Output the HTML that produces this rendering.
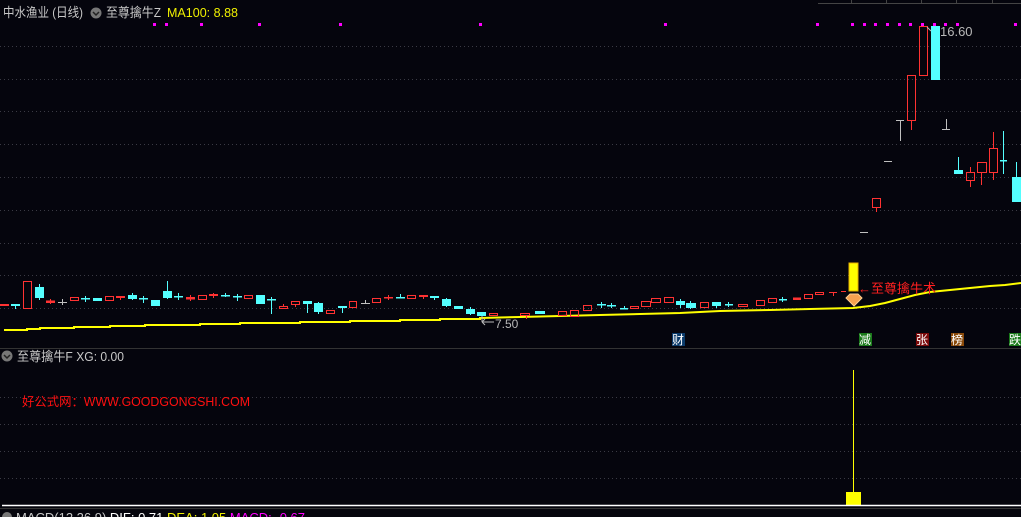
<!DOCTYPE html>
<html><head><meta charset="utf-8"><style>
html,body{margin:0;padding:0;background:#05050d;width:1021px;height:517px;overflow:hidden}
svg{display:block}
text{font-family:"Liberation Sans","Noto Sans CJK SC",sans-serif}
</style></head><body>
<svg width="1021" height="517" viewBox="0 0 1021 517" xmlns="http://www.w3.org/2000/svg">
<rect width="1021" height="517" fill="#05050d"/>
<g stroke="#3a3a44" stroke-dasharray="1,3" stroke-width="1">
<line x1="0" y1="46.5" x2="1021" y2="46.5"/><line x1="0" y1="79.5" x2="1021" y2="79.5"/>
<line x1="0" y1="111.5" x2="1021" y2="111.5"/><line x1="0" y1="144.5" x2="1021" y2="144.5"/>
<line x1="0" y1="177.5" x2="1021" y2="177.5"/><line x1="0" y1="210.5" x2="1021" y2="210.5"/>
<line x1="0" y1="243.5" x2="1021" y2="243.5"/><line x1="0" y1="275.5" x2="1021" y2="275.5"/>
<line x1="0" y1="308.5" x2="1021" y2="308.5"/>
<line x1="0" y1="397.5" x2="1021" y2="397.5"/><line x1="0" y1="424.5" x2="1021" y2="424.5"/>
<line x1="0" y1="451.5" x2="1021" y2="451.5"/><line x1="0" y1="478.5" x2="1021" y2="478.5"/>
</g>
<line x1="0" y1="348.5" x2="1021" y2="348.5" stroke="#333"/>
<line x1="818" y1="3.5" x2="1021" y2="3.5" stroke="#444"/>
<g stroke="#444"><line x1="851.5" y1="0" x2="851.5" y2="3"/><line x1="886.5" y1="0" x2="886.5" y2="3"/><line x1="921.5" y1="0" x2="921.5" y2="3"/><line x1="956.5" y1="0" x2="956.5" y2="3"/><line x1="992.5" y1="0" x2="992.5" y2="3"/></g>
<!-- header -->
<text x="3" y="17" fill="#c8c8c8" font-size="13" textLength="80" lengthAdjust="spacingAndGlyphs">中水渔业 (日线)</text>
<circle cx="96" cy="13" r="5.5" fill="#777"/><path d="M93 12 L96 15 L99 12" stroke="#222" fill="none" stroke-width="1.5"/>
<text x="106" y="17" fill="#c8c8c8" font-size="13" textLength="55" lengthAdjust="spacingAndGlyphs">至尊擒牛Z</text>
<text x="167" y="17" fill="#f0f000" font-size="13" textLength="71" lengthAdjust="spacingAndGlyphs">MA100: 8.88</text>
<!-- magenta dots -->
<g fill="#ff00ff">
<rect x="153" y="23" width="3" height="3"/><rect x="165" y="23" width="3" height="3"/><rect x="200" y="23" width="3" height="3"/><rect x="258" y="23" width="3" height="3"/><rect x="339" y="23" width="3" height="3"/><rect x="479" y="23" width="3" height="3"/><rect x="664" y="23" width="3" height="3"/><rect x="816" y="23" width="3" height="3"/>
<rect x="851" y="23" width="3" height="3"/><rect x="863" y="23" width="3" height="3"/><rect x="874" y="23" width="3" height="3"/><rect x="886" y="23" width="3" height="3"/><rect x="898" y="23" width="3" height="3"/><rect x="909" y="23" width="3" height="3"/><rect x="921" y="23" width="3" height="3"/><rect x="933" y="23" width="3" height="3"/><rect x="944" y="23" width="3" height="3"/><rect x="956" y="23" width="3" height="3"/><rect x="1014" y="23" width="3" height="3"/>
</g>
<!-- MA line -->
<polyline fill="none" stroke="#ffff00" stroke-width="2" points="4,330 27,330 27,329 40,329 40,328 74,328 74,327 110,327 110,326 145,326 145,325 200,325 200,324 240,324 240,323 300,323 300,322 350,322 350,321 400,321 400,320 440,320 440,319 480,319 480,318 520,317 560,316 600,315 640,314 680,313 720,311 770,310 810,309 853,308 870,306 885,303 900,299 915,295 930,292 950,290 970,288 990,286 1005,285 1021,283"/>
<!-- cyan candles -->
<g fill="#54ffff" stroke="#54ffff">
<rect x="11.5" y="304.5" width="8" height="1"/><line x1="15.5" y1="305" x2="15.5" y2="309"/>
<rect x="35.5" y="287.5" width="8" height="10"/><line x1="39.5" y1="284" x2="39.5" y2="300"/>
<rect x="81.5" y="298.5" width="8" height="0.5"/><line x1="85.5" y1="296" x2="85.5" y2="302"/>
<rect x="93.5" y="298.5" width="8" height="2"/>
<rect x="128.5" y="295.5" width="8" height="3"/><line x1="132.5" y1="293" x2="132.5" y2="300"/>
<rect x="139.5" y="298.5" width="8" height="0.5"/><line x1="143.5" y1="296" x2="143.5" y2="303"/>
<rect x="151.5" y="300.5" width="8" height="5"/>
<rect x="163.5" y="291.5" width="8" height="6"/><line x1="167.5" y1="281" x2="167.5" y2="299"/>
<rect x="174.5" y="296.5" width="8" height="0.5"/><line x1="178.5" y1="293" x2="178.5" y2="300"/>
<rect x="221.5" y="295.5" width="8" height="0.5"/><line x1="225.5" y1="293" x2="225.5" y2="297"/>
<rect x="233.5" y="296.5" width="8" height="0.5"/><line x1="237.5" y1="294" x2="237.5" y2="301"/>
<rect x="256.5" y="295.5" width="8" height="8"/>
<rect x="267.5" y="299.5" width="8" height="0.5"/><line x1="271.5" y1="297" x2="271.5" y2="314"/>
<rect x="303.5" y="301.5" width="8" height="2"/><line x1="307.5" y1="301" x2="307.5" y2="313"/>
<rect x="314.5" y="303.5" width="8" height="8"/><line x1="318.5" y1="302" x2="318.5" y2="314"/>
<rect x="338.5" y="306.5" width="8" height="1"/><line x1="342.5" y1="306" x2="342.5" y2="313"/>
<rect x="396.5" y="297.5" width="8" height="0.5"/><line x1="400.5" y1="294" x2="400.5" y2="298"/>
<rect x="430.5" y="296.5" width="8" height="1"/><line x1="434.5" y1="296" x2="434.5" y2="300"/>
<rect x="442.5" y="299.5" width="8" height="6"/><line x1="446.5" y1="298" x2="446.5" y2="307"/>
<rect x="454.5" y="306.5" width="8" height="2"/>
<rect x="466.5" y="309.5" width="8" height="4"/><line x1="470.5" y1="307" x2="470.5" y2="315"/>
<rect x="477.5" y="312.5" width="8" height="3"/>
<rect x="535.5" y="311.5" width="9" height="2"/>
<rect x="597.5" y="304.5" width="8" height="0.5"/><line x1="601.5" y1="302" x2="601.5" y2="308"/>
<rect x="607.5" y="305.5" width="8" height="0.5"/><line x1="611.5" y1="303" x2="611.5" y2="308"/>
<rect x="620.5" y="308.5" width="7" height="0.5"/><line x1="624.5" y1="306" x2="624.5" y2="309"/>
<rect x="676.5" y="301.5" width="8" height="3"/><line x1="680.5" y1="299" x2="680.5" y2="308"/>
<rect x="686.5" y="303.5" width="9" height="4"/><line x1="690.5" y1="301" x2="690.5" y2="309"/>
<rect x="712.5" y="302.5" width="8" height="3"/><line x1="716.5" y1="302" x2="716.5" y2="308"/>
<rect x="725.5" y="304.5" width="7" height="0.5"/><line x1="728.5" y1="302" x2="728.5" y2="307"/>
<rect x="779.5" y="299.5" width="7" height="0.5"/><line x1="782.5" y1="297" x2="782.5" y2="302"/>
<rect x="931.5" y="26.5" width="8" height="53"/>
<rect x="954.5" y="170.5" width="8" height="3"/><line x1="958.5" y1="157" x2="958.5" y2="171"/>
<rect x="1000.5" y="160.5" width="6" height="0.5"/><line x1="1003.5" y1="131" x2="1003.5" y2="174"/>
<rect x="1012.5" y="177.5" width="9" height="24"/><line x1="1016.5" y1="162" x2="1016.5" y2="178"/>
</g>
<!-- red candles -->
<g fill="none" stroke="#ff3232">
<rect x="0.5" y="304.5" width="8" height="1" fill="#ff3232"/>
<rect x="23.5" y="281.5" width="8" height="27"/>
<rect x="46.5" y="301" width="8" height="1.5" fill="#ff3232"/><line x1="50.5" y1="299" x2="50.5" y2="304"/>
<rect x="70.5" y="297.5" width="8" height="3"/>
<rect x="105.5" y="296.5" width="8" height="4"/>
<rect x="116.5" y="296.5" width="8" height="1" fill="#ff3232"/><line x1="120.5" y1="296" x2="120.5" y2="300"/>
<rect x="186.5" y="297.5" width="8" height="1.5" fill="#ff3232"/><line x1="190.5" y1="295" x2="190.5" y2="301"/>
<rect x="198.5" y="295.5" width="8" height="4"/>
<rect x="209.5" y="294.5" width="8" height="1" fill="#ff3232"/><line x1="213.5" y1="293" x2="213.5" y2="298"/>
<rect x="244.5" y="295.5" width="8" height="3"/>
<rect x="279.5" y="306.5" width="8" height="2"/><line x1="283.5" y1="304" x2="283.5" y2="306"/>
<rect x="291.5" y="301.5" width="8" height="3"/><line x1="295.5" y1="304" x2="295.5" y2="307"/>
<rect x="326.5" y="310.5" width="8" height="3"/>
<rect x="349.5" y="301.5" width="7" height="6"/>
<rect x="372.5" y="298.5" width="8" height="4"/>
<rect x="384.5" y="297.5" width="8" height="0.5" fill="#ff3232"/><line x1="388.5" y1="295" x2="388.5" y2="300"/>
<rect x="407.5" y="295.5" width="8" height="3"/>
<rect x="419.5" y="295.5" width="8" height="1" fill="#ff3232"/><line x1="423.5" y1="296" x2="423.5" y2="299"/>
<rect x="489.5" y="313.5" width="8" height="2"/>
<rect x="520.5" y="313.5" width="9" height="2"/><line x1="526.5" y1="315" x2="526.5" y2="319"/>
<rect x="558.5" y="311.5" width="8" height="4"/>
<rect x="570.5" y="310.5" width="8" height="6"/>
<rect x="583.5" y="305.5" width="8" height="5"/>
<rect x="630.5" y="306.5" width="8" height="2"/>
<rect x="641.5" y="301.5" width="9" height="5"/>
<rect x="651.5" y="298.5" width="9" height="4"/>
<rect x="664.5" y="297.5" width="9" height="5"/>
<rect x="700.5" y="302.5" width="8" height="5"/>
<rect x="738.5" y="304.5" width="9" height="2"/>
<rect x="756.5" y="300.5" width="8" height="5"/>
<rect x="768.5" y="298.5" width="8" height="4"/>
<rect x="793.5" y="298" width="7" height="1.5" fill="#ff3232"/>
<rect x="804.5" y="294.5" width="8" height="4"/>
<rect x="815.5" y="292.5" width="8" height="2"/>
<line x1="829" y1="292.5" x2="837" y2="292.5"/><line x1="833.5" y1="292" x2="833.5" y2="296"/>
<line x1="841" y1="291.5" x2="846" y2="291.5"/>
<rect x="872.5" y="198.5" width="8" height="9"/><line x1="876.5" y1="207" x2="876.5" y2="212"/>
<rect x="907.5" y="75.5" width="8" height="45"/><line x1="911.5" y1="120" x2="911.5" y2="130"/>
<rect x="919.5" y="26.5" width="8" height="49"/>
<rect x="966.5" y="172.5" width="8" height="8"/><line x1="970.5" y1="167" x2="970.5" y2="172"/><line x1="970.5" y1="181" x2="970.5" y2="187"/>
<rect x="977.5" y="162.5" width="9" height="10"/><line x1="981.5" y1="173" x2="981.5" y2="185"/>
<rect x="989.5" y="148.5" width="8" height="24"/><line x1="993.5" y1="132" x2="993.5" y2="148"/><line x1="993.5" y1="173" x2="993.5" y2="180"/>
</g>
<!-- grey -->
<g stroke="#c0c0c0" fill="none">
<line x1="58" y1="302.5" x2="67" y2="302.5"/><line x1="62.5" y1="299" x2="62.5" y2="305"/>
<line x1="361" y1="303.5" x2="370" y2="303.5"/><line x1="365.5" y1="300" x2="365.5" y2="304"/>
<line x1="860" y1="232.5" x2="868" y2="232.5"/>
<line x1="884" y1="161.5" x2="892" y2="161.5"/>
<line x1="896" y1="120.5" x2="904" y2="120.5"/><line x1="900.5" y1="120" x2="900.5" y2="141"/>
<line x1="942" y1="129.5" x2="950" y2="129.5"/><line x1="946.5" y1="119" x2="946.5" y2="129"/>
</g>
<text x="940" y="36" fill="#b8b8b8" font-size="13">16.60</text>
<path d="M927 27 L931 31" stroke="#b8b8b8"/>
<text x="495" y="328" fill="#b8b8b8" font-size="12">7.50</text>
<path d="M482 322 L494 322 M482 322 L485 319 M482 322 L485 325 M482 316 L482 322" stroke="#b8b8b8" fill="none"/>
<!-- signal -->
<rect x="849" y="263" width="9" height="28" fill="#ffff00" stroke="#e8b000"/>
<path d="M846 298 L850 294 L858 294 L862 298 L854 306 Z" fill="#f5a050" stroke="#ffd090"/>
<text x="858" y="293" fill="#ff2020" font-size="13">←至尊擒牛术</text>
<!-- labels -->
<g font-size="12" fill="#fff">
<rect x="672" y="333" width="13" height="13" fill="#0a3a6a"/><text x="672" y="344">财</text>
<rect x="859" y="333" width="13" height="13" fill="#1a7a1a"/><text x="859" y="344">减</text>
<rect x="916" y="333" width="13" height="13" fill="#7a0a0a"/><text x="916" y="344">张</text>
<rect x="951" y="333" width="13" height="13" fill="#8a4a0a"/><text x="951" y="344">榜</text>
<rect x="1009" y="333" width="13" height="13" fill="#1a7a1a"/><text x="1009" y="344">跌</text>
</g>
<!-- lower panel -->
<circle cx="7" cy="356" r="5.5" fill="#777"/><path d="M4 355 L7 358 L10 355" stroke="#222" fill="none" stroke-width="1.5"/>
<text x="17" y="361" fill="#c8c8c8" font-size="13" textLength="107" lengthAdjust="spacingAndGlyphs">至尊擒牛F  XG: 0.00</text>
<text x="22" y="406" fill="#ff1010" font-size="12.5" textLength="228" lengthAdjust="spacingAndGlyphs">好公式网：WWW.GOODGONGSHI.COM</text>
<line x1="853.5" y1="370" x2="853.5" y2="505" stroke="#ffff00"/>
<rect x="846" y="492" width="15" height="13" fill="#ffff00"/>
<line x1="2" y1="505.5" x2="1021" y2="505.5" stroke="#fff" stroke-width="1.5"/>
<line x1="0" y1="508.5" x2="1021" y2="508.5" stroke="#333"/>
<circle cx="7" cy="517" r="5" fill="#777"/>
<text x="16" y="522" font-size="13"><tspan fill="#c8c8c8">MACD(12,26,9) </tspan><tspan fill="#fff">DIF: 0.71 </tspan><tspan fill="#f0f000">DEA: 1.05 </tspan><tspan fill="#ff00ff">MACD: -0.67</tspan></text>
</svg>
</body></html>
